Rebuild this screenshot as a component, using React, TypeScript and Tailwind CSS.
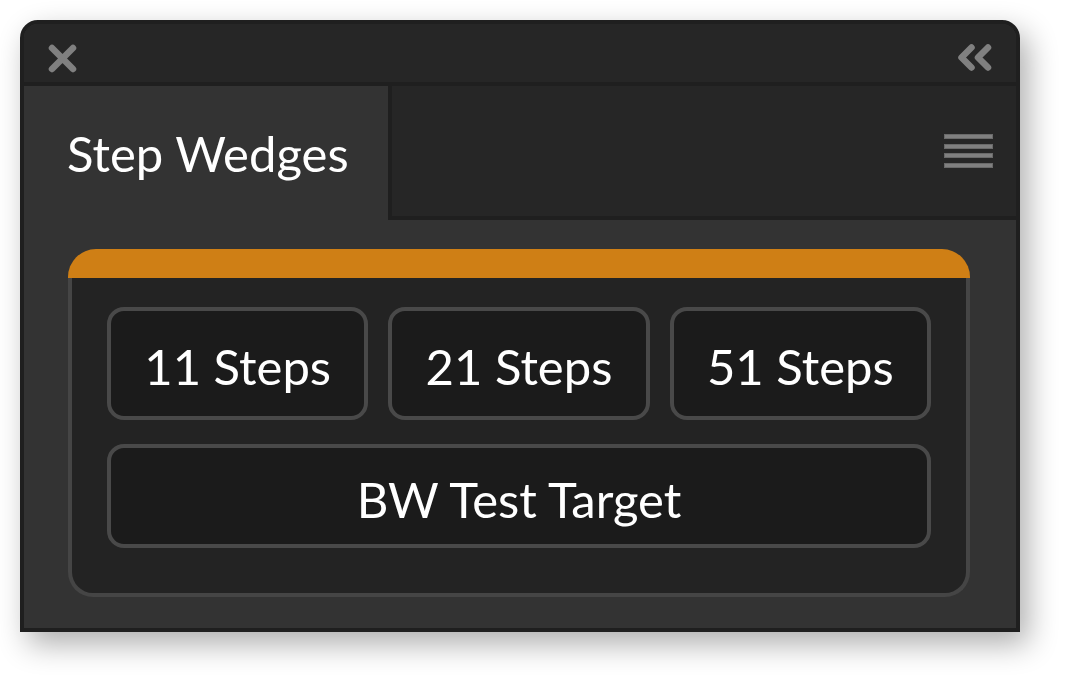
import React from 'react';

const steps = ['11 Steps', '21 Steps', '51 Steps'];

function CloseIcon() {
  return (
    <svg width="29" height="29" viewBox="0 0 29 29" fill="none">
      <path d="M4 4L25 25M25 4L4 25" stroke="#808080" strokeWidth="6.5" strokeLinecap="round" />
    </svg>
  );
}

function CollapseIcon() {
  return (
    <svg width="34" height="27" viewBox="0 0 34 27" fill="none">
      <path
        d="M13.5 3.5L3.5 13.5L13.5 23.5M30 3.5L20 13.5L30 23.5"
        stroke="#808080"
        strokeWidth="6.5"
        strokeLinecap="round"
        strokeLinejoin="round"
      />
    </svg>
  );
}

function MenuIcon() {
  return (
    <div className="flex w-[49px] flex-col gap-[4.7px]">
      {[0, 1, 2, 3].map((i) => (
        <div key={i} className="h-[5px] w-full border border-[#6a6a6a] bg-[#808080]" />
      ))}
    </div>
  );
}

function StepButton({ label, tall }: { label: string; tall?: boolean }) {
  return (
    <button
      className={`flex items-center justify-center rounded-[17px] border-4 border-[#494949] bg-[#1b1b1b] pt-[6px] text-[49px] leading-none text-white ${
        tall ? 'h-[113px]' : 'h-[104px]'
      }`}
    >
      {label}
    </button>
  );
}

export default function App() {
  return (
    <div className="min-h-screen bg-white p-[20px] font-['Lato',sans-serif]">
      <div className="flex h-[612px] w-[1000px] flex-col overflow-hidden rounded-t-[18px] border-4 border-[#1f1f1f] bg-[#333333] shadow-[8px_12px_30px_rgba(0,0,0,0.32)]">
        {/* Title bar */}
        <div className="flex h-[58px] items-start justify-between bg-[#262626] px-[24px] pt-[20px]">
          <CloseIcon />
          <CollapseIcon />
        </div>
        <div className="h-[4px] bg-[#1f1f1f]" />

        {/* Tabs */}
        <div className="flex h-[134px]">
          <div className="flex w-[364px] items-center bg-[#333333] pl-[43px] pt-[1px] text-[49px] leading-none text-white">
            Step Wedges
          </div>
          <div className="flex flex-1 items-center justify-end border-b-4 border-l-4 border-[#1f1f1f] bg-[#262626] pr-[23px]">
            <MenuIcon />
          </div>
        </div>

        {/* Content */}
        <div className="pl-[44px] pr-[46px] pt-[29px]">
          <div className="h-[29px] rounded-t-[28px] bg-[#cf7f15]" />
          <div className="rounded-b-[25px] border-x-4 border-b-4 border-[#454545] bg-[#232323] px-[35px] pb-[45px] pt-[29px]">
            <div className="grid grid-cols-3 gap-[20px]">
              {steps.map((s) => (
                <StepButton key={s} label={s} tall />
              ))}
            </div>
            <div className="mt-[24px] grid">
              <StepButton label="BW Test Target" />
            </div>
          </div>
        </div>
      </div>
    </div>
  );
}
